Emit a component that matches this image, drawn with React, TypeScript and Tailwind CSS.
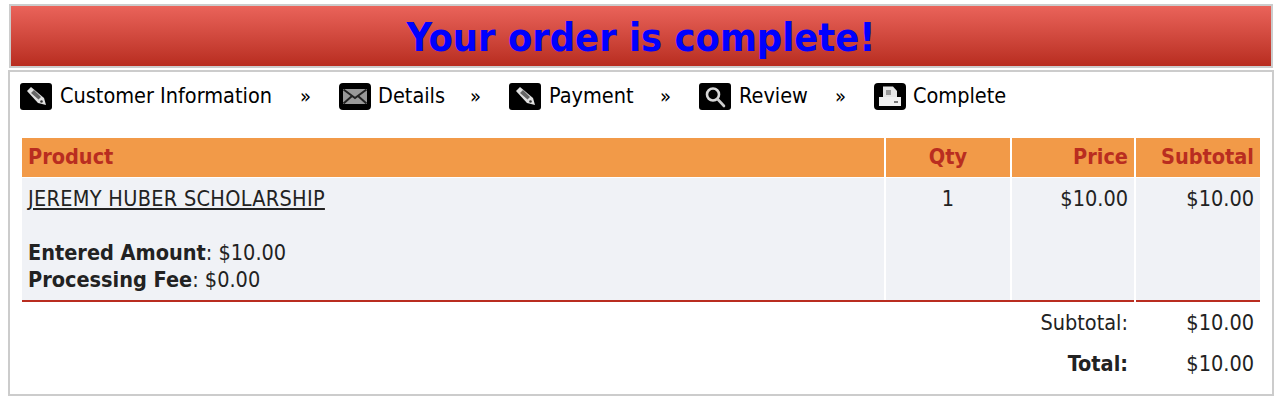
const fontFamily = "font-['DejaVu_Sans',sans-serif] [font-stretch:condensed]";

const PencilIcon = () => (
  <svg viewBox="0 0 32 27" className="h-[27px] w-[32px] shrink-0">
    <rect width="32" height="27" rx="3" fill="#000" />
    <path d="M7 8 L11 4 L24 15 L26 22 L18 20 Z" fill="#e0e0e0" />
    <path d="M11 10 L14 7 L21 14 L18.5 16.5 Z" fill="#666" />
    <circle cx="21.5" cy="18.5" r="1.3" fill="#333" />
  </svg>
);

const MailIcon = () => (
  <svg viewBox="0 0 32 27" className="h-[27px] w-[32px] shrink-0">
    <rect width="32" height="27" rx="4" fill="#000" />
    <rect x="4" y="6" width="24" height="15" fill="#999" />
    <path d="M4.5 6.5 L16 15 L27.5 6.5 M4.5 20.5 L13 13 M27.5 20.5 L19 13" fill="none" stroke="#222" strokeWidth="2" />
  </svg>
);

const SearchIcon = () => (
  <svg viewBox="0 0 32 27" className="h-[27px] w-[32px] shrink-0">
    <rect width="32" height="27" rx="3" fill="#000" />
    <circle cx="14" cy="11.5" r="6" fill="none" stroke="#d8d8d8" strokeWidth="2.6" />
    <path d="M18.5 16 L25 23" stroke="#ccc" strokeWidth="2.6" strokeLinecap="round" />
  </svg>
);

const PrinterIcon = () => (
  <svg viewBox="0 0 32 27" className="h-[27px] w-[32px] shrink-0">
    <rect width="32" height="27" rx="4" fill="#000" />
    <path d="M9 3.5 H19 L23 8 V14 H9 Z" fill="#e5e5e5" />
    <path d="M12 7 H17 V12 H12 Z" fill="#999" />
    <path d="M5 14 H27 V23 H5 Z" fill="#f0f0f0" />
    <rect x="20" y="18" width="4" height="2" fill="#777" />
  </svg>
);

const steps = [
  { label: "Customer Information", icon: <PencilIcon />, width: "w-[319px]", gap: "ml-[8px]" },
  { label: "Details", icon: <MailIcon />, width: "w-[170px]", gap: "ml-[7px]" },
  { label: "Payment", icon: <PencilIcon />, width: "w-[190px]", gap: "ml-[8px]" },
  { label: "Review", icon: <SearchIcon />, width: "w-[175px]", gap: "ml-[8px]" },
  { label: "Complete", icon: <PrinterIcon />, width: "", gap: "ml-[7px]" },
];

const App = () => {
  return (
    <div className={`h-[413px] bg-white px-[8px] pt-[4px] text-[#222] ${fontFamily}`}>
      <div className="ml-px flex h-[64px] w-[1264px] items-center justify-center border-2 border-[#cccccc] bg-gradient-to-b from-[#ea635a] to-[#b82c1f] pt-[3px]">
        <h1 className="text-[39.4px] leading-none font-bold text-[#0000ff]">Your order is complete!</h1>
      </div>

      <div className="mt-[2px] h-[326px] w-[1266px] border-2 border-[#cccccc] px-[10px] pt-[9px]">
        <div className="flex h-[30px] items-center text-[21.5px] whitespace-nowrap text-black">
          {steps.map((step, i) => (
            <div key={step.label} className={`flex items-center ${step.width}`}>
              {step.icon}
              <span className={`${step.gap} pt-px`}>{step.label}</span>
              {i < steps.length - 1 && <span className="mr-[28px] ml-auto text-[20px]">»</span>}
            </div>
          ))}
        </div>

        <div className="mt-[27px] ml-[2px] grid w-[1238px] grid-cols-[862px_124px_122px_124px] gap-x-[2px] text-[21.5px]">
          <div className="flex h-[39px] items-center bg-[#f29a48] px-[6px] font-bold text-[#b92d20]">Product</div>
          <div className="flex h-[39px] items-center justify-center bg-[#f29a48] font-bold text-[#b92d20]">Qty</div>
          <div className="flex h-[39px] items-center justify-end bg-[#f29a48] px-[6px] font-bold text-[#b92d20]">Price</div>
          <div className="flex h-[39px] items-center justify-end bg-[#f29a48] px-[6px] font-bold text-[#b92d20]">Subtotal</div>

          <div className="mt-px h-[122px] bg-[#f0f2f6] px-[6px] pt-[7px] leading-[27px]">
            <a href="#" className="tracking-[0.3px] underline">JEREMY HUBER SCHOLARSHIP</a>
            <div className="mt-[27px]"><b>Entered Amount</b>: $10.00</div>
            <div><b>Processing Fee</b>: $0.00</div>
          </div>
          <div className="mt-px h-[122px] bg-[#f0f2f6] pt-[7px] text-center leading-[27px]">1</div>
          <div className="mt-px h-[122px] bg-[#f0f2f6] px-[6px] pt-[7px] text-right leading-[27px]">$10.00</div>
          <div className="mt-px h-[122px] bg-[#f0f2f6] px-[6px] pt-[7px] text-right leading-[27px]">$10.00</div>
        </div>

        <div className="ml-[2px] grid h-[2px] w-[1238px] grid-cols-[1112px_124px] gap-x-[2px]">
          <div className="bg-[#b92d20]" />
          <div className="bg-[#b92d20]" />
        </div>

        <div className="ml-[2px] grid w-[1238px] grid-cols-[1112px_124px] gap-x-[2px] pt-[7px] text-[21.5px] leading-[27px]">
          <div className="px-[6px] text-right">Subtotal:</div>
          <div className="px-[6px] text-right">$10.00</div>
          <div className="mt-[14px] px-[6px] text-right font-bold">Total:</div>
          <div className="mt-[14px] px-[6px] text-right">$10.00</div>
        </div>
      </div>
    </div>
  );
};

export default App;
